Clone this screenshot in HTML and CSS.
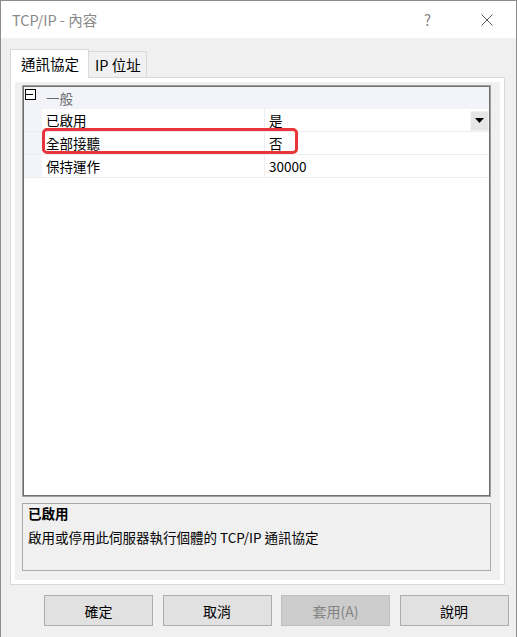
FILE: index.html
```html
<!DOCTYPE html>
<html lang="zh-Hant">
<head>
  <meta charset="UTF-8" />
  <title>TCP/IP - 內容</title>
  <link rel="stylesheet" href="styles.css">
</head>
<body>
  <div class="window">
    <div class="titlebar">
      <span class="title">TCP/IP - 內容</span>
      <span class="help">?</span>
      <span class="close">
        <svg width="12" height="12" viewBox="0 0 12 12"><path d="M0.5 0.5 L11.5 11.5 M11.5 0.5 L0.5 11.5" stroke="#555" stroke-width="1" fill="none"/></svg>
      </span>
    </div>

    <div class="content">
      <div class="tabs">
        <div class="tab active">通訊協定</div>
        <div class="tab">IP 位址</div>
      </div>

      <div class="panel">
        <div class="page">
          <div class="grid">
            <!-- category -->
            <div class="category">
              <span class="toggle">
                <svg width="11" height="11" viewBox="0 0 11 11"><rect x="0.5" y="0.5" width="10" height="10" fill="#fff" stroke="#000"/><path d="M1 5.5 H8" stroke="#000"/></svg>
              </span>
              <span class="cat-name">一般</span>
            </div>

            <div class="row">
              <div class="margin"></div>
              <div class="name">已啟用</div>
              <div class="value">
                <span>是</span>
                <span class="drop"><svg width="9" height="5" viewBox="0 0 9 5"><path d="M0 0 H9 L4.5 5 Z" fill="#000"/></svg></span>
              </div>
            </div>
            <div class="row">
              <div class="margin"></div>
              <div class="name">全部接聽</div>
              <div class="value"><span>否</span></div>
              <div class="highlight"></div>
            </div>
            <div class="row">
              <div class="margin"></div>
              <div class="name">保持運作</div>
              <div class="value"><span>30000</span></div>
            </div>
          </div>

          <div class="desc">
            <div class="desc-title">已啟用</div>
            <div class="desc-text">啟用或停用此伺服器執行個體的 TCP/IP 通訊協定</div>
          </div>
        </div>
      </div>

      <div class="buttons">
        <button>確定</button>
        <button>取消</button>
        <button disabled>套用(A)</button>
        <button>說明</button>
      </div>
    </div>
  </div>
</body>
</html>
```

FILE: styles.css
```css
* {
  box-sizing: border-box;
}
body {
  margin: 0;
  font-family: "Noto Sans CJK TC", "Noto Sans", sans-serif;
  color: #000;
}
.window {
  width: 517px;
  height: 637px;
  border: 1px solid #8c8c8c;
  border-bottom: none;
  background-color: #f0f0f0;
  display: flex;
  flex-direction: column;
}
.titlebar {
  height: 37px;
  background-color: #fff;
  display: flex;
  align-items: center;
  padding-left: 11px;
  color: #8a8a8a;
  font-size: 14.5px;
}
.title {
  flex: 1;
  line-height: 20px;
}
.help {
  width: 14px;
  margin-right: 43px;
  font-size: 15px;
  color: #8a8a8a;
}
.close {
  display: flex;
  margin-right: 23px;
}
.content {
  flex: 1;
  padding: 11px 0 0 9px;
}
.tabs {
  display: flex;
  align-items: flex-end;
  margin-bottom: -1px;
}
.tab {
  font-size: 14.5px;
  line-height: 20px;
  height: 26px;
  width: 58px;
  padding: 3px 0 0 6px;
  border: 1px solid #d9d9d9;
  border-bottom: none;
  border-left: none;
  margin-bottom: 1px;
  background-color: #f0f0f0;
}
.tab.active {
  position: relative;
  z-index: 1;
  height: 29px;
  width: 79px;
  padding: 4px 0 0 10px;
  border-left: 1px solid #d9d9d9;
  margin-bottom: 0;
  background-color: #fff;
}
.panel {
  width: 495px;
  height: 508px;
  border: 1px solid #d9d9d9;
  background-color: #fff;
  padding: 4px;
}
.page {
  height: 498px;
  background-color: #f0f0f0;
  padding: 3px 9px 9px 7px;
}
.grid {
  position: relative;
  height: 412px;
  border: 1px solid #a0a0a0;
  box-shadow: inset 0 0 0 1px #6e6e6e;
  background-color: #fff;
  padding: 1px;
  font-size: 13.5px;
}
.category {
  height: 22px;
  display: flex;
  align-items: center;
  background-color: #f2f4fa;
  border-bottom: 1px solid #f2f4fa;
}
.toggle {
  display: flex;
  margin-left: 1px;
  margin-top: -6px;
  width: 21px;
}
.cat-name {
  color: #6d6d6d;
  line-height: 20px;
}
.row {
  position: relative;
  display: flex;
  height: 23px;
  border-bottom: 1px solid #ededed;
}
.margin {
  width: 18px;
  background-color: #f2f4fa;
}
.name {
  width: 223px;
  padding-left: 4px;
  line-height: 22px;
  border-right: 1px solid #ededed;
}
.value {
  flex: 1;
  display: flex;
  align-items: center;
  padding-left: 4px;
  line-height: 22px;
}
.drop {
  margin-left: auto;
  margin-top: 1px;
  width: 19px;
  height: 20px;
  background-color: #e6e6e6;
  border: 1px solid #f4f4f4;
  display: flex;
  align-items: center;
  justify-content: center;
}
.highlight {
  position: absolute;
  left: 18px;
  top: -4px;
  width: 256px;
  height: 26px;
  border: 3px solid #e8343a;
  border-radius: 5px;
}
.desc {
  margin-top: 6px;
  height: 68px;
  border: 1px solid #a9a9a9;
  padding-left: 5px;
  font-size: 13.5px;
}
.desc-title {
  font-weight: bold;
  line-height: 18px;
}
.desc-text {
  margin-top: 6px;
  line-height: 18px;
}
.buttons {
  display: flex;
  gap: 9.5px;
  padding-left: 34px;
  margin-top: 10px;
}
button {
  width: 109px;
  height: 31px;
  font-family: inherit;
  font-size: 14px;
  background-color: #e1e1e1;
  border: 1px solid #adadad;
  color: #000;
  padding: 0;
}
button:disabled {
  background-color: #cccccc;
  border-color: #bfbfbf;
  color: #838383;
}
```
